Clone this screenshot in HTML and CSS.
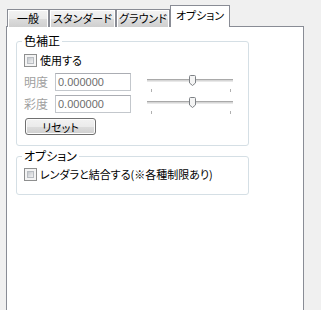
FILE: index.html
```html
<!DOCTYPE html>
<html lang="ja">
<head>
    <meta charset="UTF-8">
    <title>オプション</title>
    <link rel="stylesheet" href="styles.css">
</head>
<body>
    <div class="tabview">
        <div class="tabs">
            <div class="tab tab-general">一般</div>
            <div class="tab tab-standard">スタンダード</div>
            <div class="tab tab-ground">グラウンド</div>
            <div class="tab tab-option active">オプション</div>
        </div>

        <div class="panel">
            <fieldset class="group group-color">
                <legend>色補正</legend>
                <label class="check">
                    <span class="box"><span class="box-inner"></span></span>
                    <span>使用する</span>
                </label>

                <div class="row">
                    <span class="row-label">明度</span>
                    <div class="field">0.000000</div>
                    <div class="slider">
                        <div class="track"></div>
                        <div class="ticks"><span></span><span></span></div>
                        <svg class="thumb" width="7" height="11" viewBox="0 0 7 11">
                            <path d="M0.5 1.5 Q0.5 0.5 1.5 0.5 L5.5 0.5 Q6.5 0.5 6.5 1.5 L6.5 8 L3.5 10.5 L0.5 8 Z" fill="#f4f4f4" stroke="#7e8286"/>
                        </svg>
                    </div>
                </div>

                <div class="row">
                    <span class="row-label">彩度</span>
                    <div class="field">0.000000</div>
                    <div class="slider">
                        <div class="track"></div>
                        <div class="ticks"><span></span><span></span></div>
                        <svg class="thumb" width="7" height="11" viewBox="0 0 7 11">
                            <path d="M0.5 1.5 Q0.5 0.5 1.5 0.5 L5.5 0.5 Q6.5 0.5 6.5 1.5 L6.5 8 L3.5 10.5 L0.5 8 Z" fill="#f4f4f4" stroke="#7e8286"/>
                        </svg>
                    </div>
                </div>

                <button class="btn">リセット</button>
            </fieldset>

            <fieldset class="group group-option">
                <legend>オプション</legend>
                <label class="check">
                    <span class="box"><span class="box-inner"></span></span>
                    <span>レンダラと結合する(※各種制限あり)</span>
                </label>
            </fieldset>
        </div>
    </div>
</body>
</html>
```

FILE: styles.css
```css
html, body {
    margin: 0;
    height: 100%;
}

body {
    background-color: #f0f0f0;
    font-family: "Noto Sans CJK JP", sans-serif;
    font-size: 11px;
    font-feature-settings: "palt";
    color: #000;
    overflow: hidden;
    white-space: nowrap;
}

.tabview {
    margin-left: 6px;
    width: 298px;
    padding-top: 5px;
}

/* tab strip */
.tabs {
    display: flex;
    align-items: flex-end;
    height: 22px;
    padding-left: 1px;
    position: relative;
    z-index: 1;
}

.tab {
    box-sizing: border-box;
    height: 18px;
    border: 1px solid #898c95;
    border-bottom: none;
    background: linear-gradient(#f3f3f3, #ebebeb 50%, #dddddd 50%, #cfcfcf);
    box-shadow: inset 1px 1px 0 #fff, inset -1px 0 0 #fff;
    text-align: center;
    line-height: 16px;
    overflow: hidden;
}

.tab-general { width: 42px; }
.tab-standard { width: 67px; }
.tab-ground { width: 54px; }
.tab-option { width: 60px; }

.tab.active {
    height: 22px;
    background: #fff;
    box-shadow: none;
    line-height: 19px;
}

.panel {
    box-sizing: border-box;
    height: 285px;
    margin-top: -1px;
    background-color: #fff;
    border: 1px solid #898c95;
    padding: 7px 0 0 9px;
}

/* group boxes */
.group {
    width: 233px;
    box-sizing: border-box;
    margin: 0;
    border: 1px solid #d5dfe5;
    border-radius: 3px;
    padding: 3px 7px 10px;
}

.group legend {
    padding: 0 2px;
    margin-left: -2px;
    font-size: 12px;
    line-height: 14px;
}

.group-option {
    margin-top: 3px;
    padding-top: 2px;
    padding-bottom: 11px;
}

.check {
    display: flex;
    align-items: center;
    height: 18px;
    gap: 3px;
}

.box {
    box-sizing: border-box;
    width: 13px;
    height: 13px;
    border: 1px solid #8e8f8f;
    background-color: #f4f4f4;
    padding: 2px;
}

.box-inner {
    display: block;
    width: 7px;
    height: 7px;
    background: linear-gradient(135deg, #c4c8cd, #f2f2f2);
    border: 1px solid #b9bdc2;
    box-sizing: border-box;
}

/* value rows */
.row {
    display: flex;
    align-items: flex-start;
    height: 22px;
}

.row:first-of-type {
    margin-top: 4px;
}

.row-label {
    width: 31px;
    font-size: 12px;
    line-height: 18px;
    color: #a0a0a0;
}

.field {
    box-sizing: border-box;
    width: 76px;
    height: 18px;
    border: 1px solid #c3c7cc;
    border-top-color: #abadb3;
    padding-left: 2px;
    font-family: "Liberation Sans", sans-serif;
    font-size: 11px;
    line-height: 16px;
    color: #6d6d6d;
}

.slider {
    position: relative;
    width: 90px;
    height: 20px;
    margin: 2px 0 0 14px;
}

.track {
    height: 1px;
    margin: 4px 2px 0;
    border-top: 1px solid #a9a9a9;
    border-bottom: 1px solid #e8e8e8;
    background-color: #d6d6d6;
}

.ticks {
    display: flex;
    justify-content: space-between;
    margin: 7px 4px 0 6px;
}

.ticks span {
    width: 1px;
    height: 3px;
    background-color: #b0b0b0;
}

.thumb {
    position: absolute;
    left: 44px;
    top: 0;
}

.btn {
    box-sizing: border-box;
    width: 71px;
    height: 17px;
    margin: 1px 0 0 1px;
    padding: 0;
    border: 1px solid #707070;
    border-radius: 3px;
    background: linear-gradient(#f2f2f2, #ebebeb 50%, #dddddd 50%, #cfcfcf);
    box-shadow: inset 0 0 0 1px #fcfcfc;
    font-family: inherit;
    font-size: 11px;
    font-feature-settings: "palt";
    line-height: 14px;
    color: #000;
}
```
